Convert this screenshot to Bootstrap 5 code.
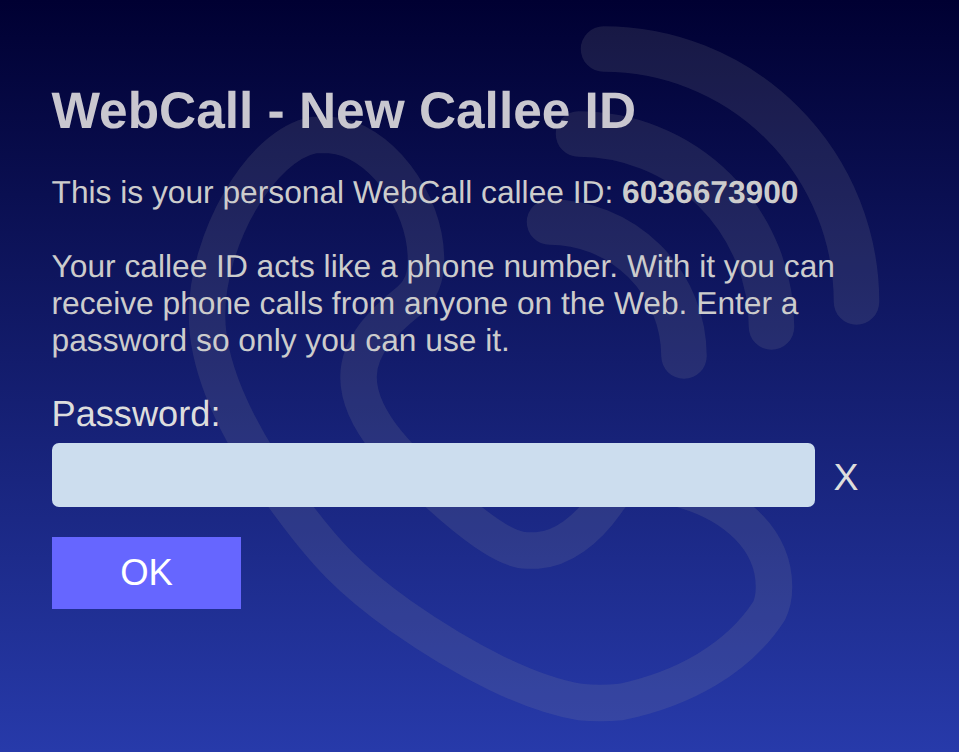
<!DOCTYPE html>
<html lang="en">
<head>
<meta charset="utf-8">
<meta name="viewport" content="width=device-width, initial-scale=1">
<title>WebCall - New Callee ID</title>
<link href="https://cdn.jsdelivr.net/npm/bootstrap@5.3.0/dist/css/bootstrap.min.css" rel="stylesheet">
<style>
html, body { height: 100%; }
body { font-family: "Liberation Sans", Arial, sans-serif; background: linear-gradient(#000032, #273aaa); color: #ccc; overflow: hidden; }
.backdrop { z-index: 0; }
.page-body { z-index: 1; padding: 80px 51.500px 0; font-size: 31.720px; line-height: 37px; text-rendering: geometricPrecision; }
.title { font-size: 51.400px; line-height: 60px; margin-bottom: 34px; color: #c9c7cf; white-space: nowrap; }
.intro { margin-bottom: 37px; }
.pw-label { font-size: 36.200px; line-height: 42px; color: #ddd; margin: 34px 0 8px; }
.pw-row { margin-left: .5px; }
.pw-input, .pw-input:focus { width: 763px; height: 64px; background: #cde; border-radius: 7px; font-size: 36px; }
.clear-btn { font-size: 37.500px; line-height: 42px; color: #ddd; margin: 4px 0 0 18.500px; }
.ok-btn, .ok-btn:hover { width: 189px; height: 72px; background: #66f; color: #fff; font-size: 36.500px; line-height: 42px; margin: 30px 0 0 .5px; }
</style>
</head>
<body>
<svg class="backdrop position-absolute top-0 start-0" width="959" height="752" viewBox="0 0 959 752" fill="none" stroke="#999" stroke-opacity=".15" stroke-linecap="round" aria-hidden="true">
  <path stroke-width="36.5" d="M314 135H330C378 138 426 200 426 260C426 278 421 290 410 300C385 320 358.500 345 358.500 377C358.500 422 405 465 453 507C480 530 508 550.500 527 550.500H537C562 549 587 530 606 503C621 479 640 480 680 489C735 504 774 540 774 587C774 597 773 603 769 611C738 659 683 689 621 702Q610 703 600 703T580 702C530 694 465 661 400 615.500C350 580 325 553 291 507C245 445 207 375 207 315C207 240 260 145 314 135Z"/>
  <g stroke-width="45.500">
    <path d="M603.500 49A253 253 0 0 1 856.500 302"/>
    <path d="M578.500 134A193 193 0 0 1 771.500 327"/>
    <path d="M549.500 222A134.500 134.500 0 0 1 684 356"/>
  </g>
</svg>
<main class="page-body position-relative">
  <h1 class="title fw-bold">WebCall - New Callee ID</h1>
  <p class="intro">This is your personal WebCall callee ID: <b>6036673900</b></p>
  <p class="mb-0">Your callee ID acts like a phone number. With it you can<br>receive phone calls from anyone on the Web. Enter a<br>password so only you can use it.</p>
  <form>
    <label class="pw-label d-block" for="pw">Password:</label>
    <div class="pw-row d-flex align-items-center">
      <input class="pw-input form-control border-0 shadow-none" id="pw" type="password">
      <button class="clear-btn btn border-0 p-0" type="button">X</button>
    </div>
    <button class="ok-btn btn border-0 rounded-0 p-0 d-block" type="button">OK</button>
  </form>
</main>
<script src="https://cdn.jsdelivr.net/npm/bootstrap@5.3.0/dist/js/bootstrap.bundle.min.js"></script>
</body>
</html>
